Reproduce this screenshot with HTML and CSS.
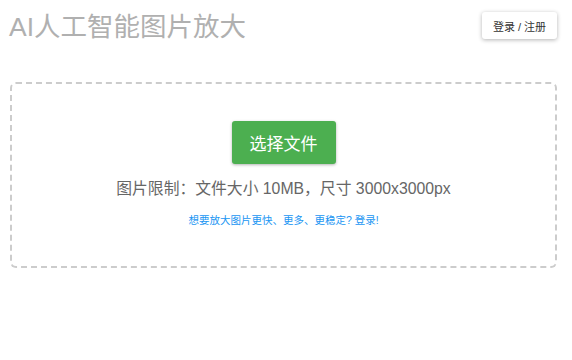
FILE: index.html
```html
<!DOCTYPE html>
<html>
<head>
    <title>AI人工智能图片放大</title>
    <meta charset="UTF-8">
    <link rel="stylesheet" href="styles.css">
</head>
<body>
    <div class="page">
        <div class="header">
            <h1 class="title">AI人工智能图片放大</h1>
            <button type="button" class="login-btn">登录 / 注册</button>
        </div>
        <div class="drop-zone">
            <button type="button" class="choose-btn">选择文件</button>
            <p class="limit">图片限制：文件大小 10MB，尺寸 3000x3000px</p>
            <a class="promo" href="#">想要放大图片更快、更多、更稳定? 登录!</a>
        </div>
    </div>
</body>
</html>
```

FILE: styles.css
```css
/* Estilos */
body {
    margin: 0;
    font-family: "Liberation Sans", "Noto Sans CJK SC", sans-serif;
    background-color: #fff;
}
.page {
    padding: 0 15px 0 10px;
}
.header {
    display: flex;
    align-items: flex-start;
    justify-content: space-between;
    height: 82px;
}
.title {
    margin: 9px 0 0 -1px;
    font-size: 26.5px;
    font-weight: normal;
    color: #b0b0b0;
    line-height: 36px;
}
.login-btn {
    margin-top: 12px;
    width: 75px;
    height: 27px;
    padding: 0;
    border: none;
    border-radius: 3px;
    background-color: #fff;
    box-shadow: 0 1px 4px rgba(0, 0, 0, 0.3);
    font-family: "Liberation Sans", "Noto Sans CJK SC", sans-serif;
    font-size: 11px;
    color: #333;
    cursor: pointer;
}
.drop-zone {
    display: flex;
    flex-direction: column;
    align-items: center;
    height: 182px;
    border: 2px dashed #ccc;
    border-radius: 6px;
}
.choose-btn {
    margin-top: 37px;
    width: 104px;
    height: 43px;
    border: none;
    border-radius: 3px;
    background-color: #4caf50;
    box-shadow: 0 1px 3px rgba(0, 0, 0, 0.3);
    font-family: "Liberation Sans", "Noto Sans CJK SC", sans-serif;
    font-size: 17px;
    color: #fff;
    cursor: pointer;
}
.limit {
    margin: 14px 0 0;
    font-size: 15.8px;
    line-height: 22px;
    color: #666;
}
.promo {
    margin-top: 13px;
    font-size: 10.5px;
    line-height: 14px;
    color: #2196f3;
    text-decoration: none;
}
```
